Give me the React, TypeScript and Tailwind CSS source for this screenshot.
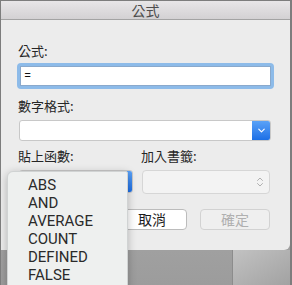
import { ChevronDown, ChevronsUpDown } from "lucide-react";

const cjk = { fontFamily: '"Noto Sans CJK TC", "Noto Sans", sans-serif' };
const latin = { fontFamily: 'Roboto, "Liberation Sans", Arial, sans-serif' };

const functions = ["ABS", "AND", "AVERAGE", "COUNT", "DEFINED", "FALSE"];

export default function App() {
  return (
    <div
      className="relative w-[292px] h-[285px] overflow-hidden border-t border-l border-r-2 border-[#7d7d7d] bg-gradient-to-b from-[#bdbdbd] to-[#9c9c9c] flex flex-col"
      style={cjk}
    >
      {/* title bar */}
      <div className="h-[19px] shrink-0 flex items-center justify-center bg-gradient-to-b from-[#e8e6e8] to-[#d3d1d3] border-b border-[#a3a3a3] text-[14px] leading-none text-[#4d4d4d]">
        公式
      </div>

      {/* dialog body */}
      <div className="h-[230px] shrink-0 bg-[#ececec] rounded-br-[6px] pl-[16px] pr-[16px] pt-[24px] text-[13px] text-[#262626]">
        <div className="leading-[13px] pl-[1px]">公式:</div>
        <div className="mt-[6px] h-[26px] rounded-[4px] bg-[#8dbbe9] p-[3px]">
          <div className="h-full bg-white border border-[#8aa9cc] flex items-center pl-[3px] text-[13px] text-[#111]" style={latin}>
            =
          </div>
        </div>

        <div className="mt-[10px] leading-[13px] pl-[1px]">數字格式:</div>
        <div className="mt-[8px] ml-[2px] mr-[3px] h-[21px] flex bg-white border border-[#c8c8c8] rounded-[3px] overflow-hidden">
          <div className="flex-1" />
          <div className="w-[18px] bg-gradient-to-b from-[#5aa2f7] to-[#1b6fe6] flex items-center justify-center">
            <ChevronDown size={11} strokeWidth={2.5} className="text-white" />
          </div>
        </div>

        <div className="mt-[8px] flex text-[13px] leading-[13px]">
          <div className="w-[124px] pl-[1px]">貼上函數:</div>
          <div>加入書籤:</div>
        </div>

        <div className="mt-[8px] flex gap-[9px] ml-[2px]">
          <div className="w-[114px] h-[23px] flex bg-white border border-[#c8c8c8] rounded-[3px] overflow-hidden">
            <div className="flex-1" />
            <div className="w-[17px] bg-gradient-to-b from-[#5aa2f7] to-[#1b6fe6]" />
          </div>
          <div className="w-[128px] h-[24px] flex items-center justify-end pr-[3px] bg-[#f3f3f3] border border-[#d6d6d6] rounded-[4px]">
            <ChevronsUpDown size={12} strokeWidth={1.5} className="text-[#9a9a9a]" />
          </div>
        </div>

        <div className="mt-[15px] mr-[4px] flex justify-end gap-[13px]">
          <div className="w-[70px] h-[21px] flex items-center justify-center bg-white border border-[#bcbcbc] rounded-[4px] text-[14px] text-[#1c1c1c]">
            取消
          </div>
          <div className="w-[70px] h-[21px] flex items-center justify-center bg-[#efefef] border border-[#d2d2d2] rounded-[4px] text-[14px] text-[#b0b0b0]">
            確定
          </div>
        </div>
      </div>

      {/* window behind */}
      <div className="flex-1 flex">
        <div className="w-[232px] border-r border-[#8c8c8c]" />
        <div className="flex-1 bg-gradient-to-br from-[#c2c2c2] to-[#a2a2a2]" />
      </div>

      {/* open popup list */}
      <div
        className="absolute left-[6px] top-[170px] w-[121px] h-[130px] bg-[#eef0ef] border border-[#d0d3d3] rounded-tl-[6px] rounded-tr-[2px] shadow-[0_2px_8px_rgba(0,0,0,0.25)] pt-[4px]"
        style={latin}
      >
        {functions.map((f) => (
          <div key={f} className="pl-[20px] h-[18px] text-[15px] leading-[18px] text-[#2a2a2a]">
            {f}
          </div>
        ))}
      </div>
    </div>
  );
}
